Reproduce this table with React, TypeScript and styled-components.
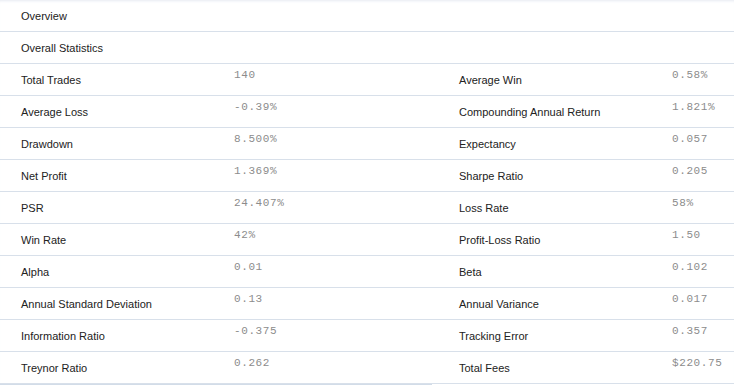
import React from "react";
import styled, { createGlobalStyle } from "styled-components";

const Global = createGlobalStyle`
  html, body { margin: 0; padding: 0; background: #ffffff; }
  body { font-family: "Liberation Sans", Arial, sans-serif; }
`;

const Page = styled.div`
  width: 734px;
  background: #fff;
  box-shadow: inset 0 3px 3px -2px #e6eaf2;
`;

const HeaderRow = styled.div`
  height: 32px;
  box-sizing: border-box;
  border-bottom: 1px solid #d8e0ea;
  display: flex;
  align-items: center;
  padding-left: 21px;
  font-size: 11px;
  color: #222;
`;

const Halves = styled.div`
  display: grid;
  grid-template-columns: 432px 302px;
  align-items: start;
`;

const Half = styled.div<{ $heavy?: boolean }>`
  display: flex;
  flex-direction: column;
  border-bottom: ${(p) => (p.$heavy ? "1px solid #d2dce8" : "0")};
`;

const Row = styled.div<{ $labelWidth: number }>`
  height: 32px;
  box-sizing: border-box;
  border-bottom: 1px solid #d8e0ea;
  display: grid;
  grid-template-columns: ${(p) => p.$labelWidth}px 1fr;
`;

const Label = styled.div<{ $pad: number }>`
  display: flex;
  align-items: center;
  padding-left: ${(p) => p.$pad}px;
  font-size: 11px;
  color: #222;
  white-space: nowrap;
`;

const Value = styled.div`
  padding-top: 5px;
  font-family: "Liberation Mono", "Courier New", monospace;
  font-size: 11px;
  letter-spacing: 0.6px;
  color: #8c8c8c;
  white-space: nowrap;
  line-height: 12px;
`;

const left: [string, string][] = [
  ["Total Trades", "140"],
  ["Average Loss", "-0.39%"],
  ["Drawdown", "8.500%"],
  ["Net Profit", "1.369%"],
  ["PSR", "24.407%"],
  ["Win Rate", "42%"],
  ["Alpha", "0.01"],
  ["Annual Standard Deviation", "0.13"],
  ["Information Ratio", "-0.375"],
  ["Treynor Ratio", "0.262"],
];

const right: [string, string][] = [
  ["Average Win", "0.58%"],
  ["Compounding Annual Return", "1.821%"],
  ["Expectancy", "0.057"],
  ["Sharpe Ratio", "0.205"],
  ["Loss Rate", "58%"],
  ["Profit-Loss Ratio", "1.50"],
  ["Beta", "0.102"],
  ["Annual Variance", "0.017"],
  ["Tracking Error", "0.357"],
  ["Total Fees", "$220.75"],
];

export default function App() {
  return (
    <>
      <Global />
      <Page>
        <HeaderRow>Overview</HeaderRow>
        <HeaderRow>Overall Statistics</HeaderRow>
        <Halves>
          <Half $heavy>
            {left.map(([k, v]) => (
              <Row key={k} $labelWidth={234}>
                <Label $pad={21}>{k}</Label>
                <Value>{v}</Value>
              </Row>
            ))}
          </Half>
          <Half>
            {right.map(([k, v]) => (
              <Row key={k} $labelWidth={240}>
                <Label $pad={27}>{k}</Label>
                <Value>{v}</Value>
              </Row>
            ))}
          </Half>
        </Halves>
      </Page>
    </>
  );
}
